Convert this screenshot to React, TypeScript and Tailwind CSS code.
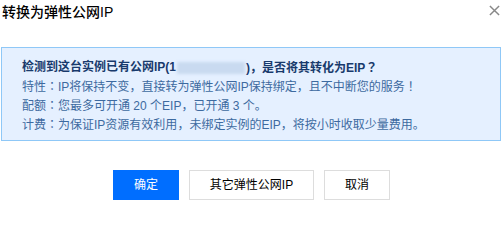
import React from "react";

function P({ c }: { c: string }) {
  return <span style={{ fontFamily: '"Noto Sans CJK JP", sans-serif' }}>{c}</span>;
}

export default function App() {
  return (
    <div
      className="relative w-[503px] h-[202px] bg-white overflow-hidden flex flex-col"
      style={{ fontFamily: '"Liberation Sans", "Noto Sans CJK SC", sans-serif' }}
    >
      <div className="h-[24px] pl-[2px] text-[14px] leading-[24px] font-medium text-[#000]">
        转换为弹性公网IP
      </div>
      <button className="absolute right-[3px] top-[5px] w-[11px] h-[11px] text-[#888]" aria-label="close">
        <svg viewBox="0 0 12 12" className="w-full h-full" fill="none" stroke="currentColor" strokeWidth="1.6">
          <path d="M1 1 L11 11 M11 1 L1 11" />
        </svg>
      </button>
      <div className="mt-[23px] ml-[1px] w-[500px] h-[94px] border border-[#8fc8f7] bg-[#e5f0ff] pl-[20px] pt-[10px] text-[12px] leading-[17px] text-[#3d6aa0]">
        <div className="font-bold text-[#183a6c] flex items-center">
          <span>检测到这台实例已有公网IP(1</span>
          <span className="inline-block w-[68px] h-[12px] bg-[#c9daf0] blur-[1.5px] mx-[1px]"></span>
          <span>)<P c="，" />是否将其转化为EIP<P c="？" /></span>
        </div>
        <div>特性<P c="：" />IP将保持不变<P c="，" />直接转为弹性公网IP保持绑定<P c="，" />且不中断您的服务<P c="！" /></div>
        <div>配额<P c="：" />您最多可开通 20 个EIP<P c="，" />已开通 3 个<P c="。" /></div>
        <div>计费<P c="：" />为保证IP资源有效利用<P c="，" />未绑定实例的EIP<P c="，" />将按小时收取少量费用<P c="。" /></div>
      </div>
      <div className="mt-[29px] flex justify-center gap-[10px] text-[12px]">
        <button className="w-[66px] h-[30px] bg-[#006eff] text-white">确定</button>
        <button className="w-[125px] h-[30px] border border-[#dddddd] bg-white text-[#000]">其它弹性公网IP</button>
        <button className="w-[66px] h-[30px] border border-[#dddddd] bg-white text-[#000]">取消</button>
      </div>
    </div>
  );
}
